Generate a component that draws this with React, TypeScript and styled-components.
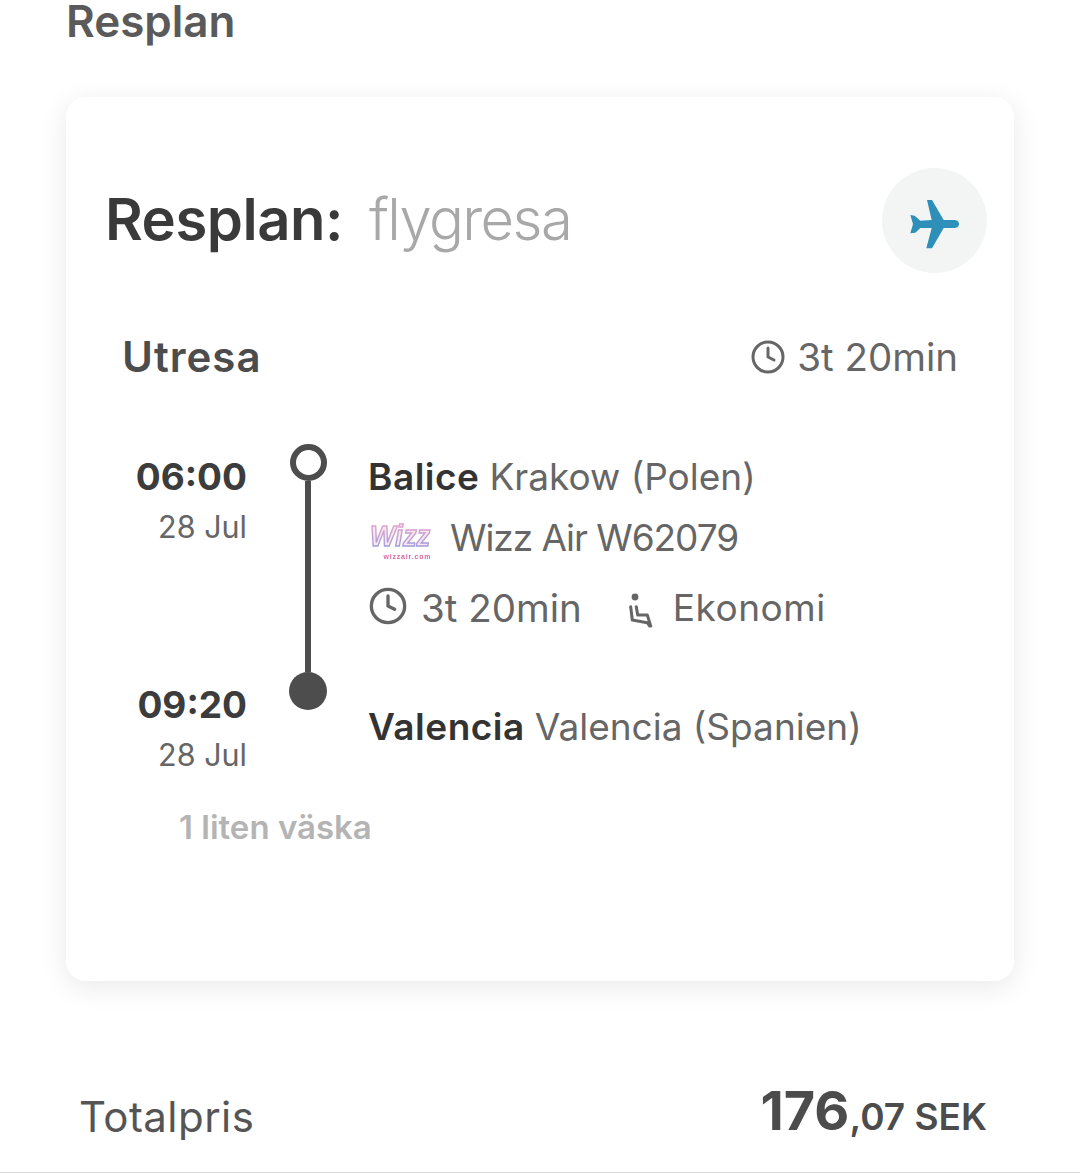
import * as React from 'react';
import styled, { createGlobalStyle } from 'styled-components';
import { Clock } from 'lucide-react';

const GlobalStyle = createGlobalStyle`
  html, body {
    margin: 0;
    padding: 0;
    background: #fff;
  }
  body {
    font-family: Inter, Roboto, sans-serif;
    color: #555;
  }
`;

const Page = styled.div`
  width: 1080px;
  height: 1173px;
  box-sizing: border-box;
  overflow: hidden;
  border-bottom: 1px solid #d8d8d8;
`;

const PageTitle = styled.h2`
  margin: 0;
  padding-left: 66px;
  font-size: 44px;
  line-height: 42px;
  font-weight: 600;
  color: #5a5a5a;
`;

const Card = styled.section`
  width: 948px;
  height: 884px;
  margin: 55px 0 0 66px;
  box-sizing: border-box;
  padding-top: 71px;
  border-radius: 20px;
  background: #fff;
  box-shadow: 0 6px 28px rgba(0, 0, 0, 0.09);
`;

const CardHeader = styled.div`
  display: flex;
  align-items: center;
  height: 105px;
  padding: 0 27px 0 39px;
`;

const CardTitle = styled.h3`
  margin: 0 0 4px;
  font-size: 58px;
  line-height: 66px;
  letter-spacing: -0.5px;
  font-weight: 600;
  color: #3a3a3a;
`;

const CardSubtitle = styled.span`
  margin: 0 0 4px 26px;
  flex: 1;
  font-size: 58px;
  line-height: 66px;
  letter-spacing: -1.6px;
  font-weight: 300;
  color: #a8a8a8;
`;

const IconCircle = styled.div`
  width: 105px;
  height: 105px;
  border-radius: 50%;
  background: #f3f4f4;
  display: flex;
  align-items: center;
  justify-content: center;
`;

const LegHeader = styled.div`
  display: flex;
  justify-content: space-between;
  align-items: center;
  height: 50px;
  margin-top: 59px;
  padding: 0 56px;
`;

const LegTitle = styled.span`
  margin-bottom: 2px;
  font-size: 42px;
  letter-spacing: 1px;
  font-weight: 600;
  color: #4c4c4c;
`;

const Duration = styled.span<{ $gap: number }>`
  display: inline-flex;
  align-items: center;
  gap: ${(p) => p.$gap}px;
  font-size: 38.5px;
  line-height: 40px;
  color: #666;
`;

const RowClock = styled(Clock)`
  margin-bottom: 5px;
`;

const Timeline = styled.div`
  display: flex;
  margin-top: 62px;
  padding-left: 56px;
`;

const TimesColumn = styled.div`
  width: 125px;
  padding-top: 13px;
  text-align: right;
`;

const Time = styled.div<{ $top?: number }>`
  margin-top: ${(p) => p.$top ?? 0}px;
  font-size: 37px;
  line-height: 40px;
  font-weight: 700;
  color: #3c3c3c;
`;

const DateText = styled.div`
  margin-top: 15px;
  font-size: 30.5px;
  line-height: 30px;
  color: #666;
`;

const Marker = styled.div`
  width: 38px;
  height: 266px;
  margin: 0 41px 0 42px;
  display: flex;
  flex-direction: column;
  align-items: center;
`;

const HollowDot = styled.div`
  width: 37px;
  height: 37px;
  box-sizing: border-box;
  flex-shrink: 0;
  border: 6px solid #4d4d4d;
  border-radius: 50%;
`;

const MarkerLine = styled.div`
  width: 6px;
  flex: 1;
  background: #4d4d4d;
`;

const SolidDot = styled.div`
  width: 38px;
  height: 38px;
  flex-shrink: 0;
  border-radius: 50%;
  background: #4d4d4d;
`;

const Details = styled.div`
  padding-top: 13px;
`;

const DetailRow = styled.div<{ $top?: number }>`
  display: flex;
  align-items: center;
  height: 40px;
  margin-top: ${(p) => p.$top ?? 0}px;
  font-size: 37px;
  line-height: 40px;
  color: #666;
  white-space: nowrap;
`;

const Place = styled.strong`
  margin-right: 10px;
  letter-spacing: 0.5px;
  font-weight: 600;
  color: #333;
`;

const FlightName = styled.span`
  margin-left: 18px;
  letter-spacing: -1.05px;
`;

const CabinLabel = styled.span`
  margin-left: 20px;
  letter-spacing: 0.5px;
`;

const SeatIcon = styled.svg`
  margin: 4px 0 0 45px;
`;

const Baggage = styled.div`
  margin: 37px 0 0 113px;
  font-size: 33px;
  line-height: 40px;
  font-weight: 600;
  color: #b4b4b4;
`;

const TotalRow = styled.div`
  display: flex;
  justify-content: space-between;
  align-items: center;
  height: 60px;
  margin-top: 105px;
  padding: 0 93px 0 79px;
`;

const TotalLabel = styled.span`
  font-size: 42px;
  letter-spacing: 0.45px;
  color: #555;
`;

const Price = styled.span`
  margin-bottom: 12px;
  font-size: 37px;
  font-weight: 600;
  color: #4c4c4c;
`;

const PriceWhole = styled.span`
  font-size: 54px;
  font-weight: 700;
`;

const PlaneIcon = () => (
  <svg width="60" height="60" viewBox="134 121 180 180">
    <path
      fill="#2e8fb8"
      d="M200 148 L215 148 L250 208 L283 208 Q296 210 296 220 Q296 230 283 232 L250 232 L215 293 L198 293 L214 232 L180 232 L165 246 L150 248 L158 220 L150 193 L163 195 L180 210 L214 208 Z"
    />
  </svg>
);

const Seat = () => (
  <SeatIcon width="26" height="36" viewBox="0 0 26 36" fill="none">
    <circle cx="8" cy="5" r="3.4" fill="#666" />
    <path
      d="M3.7 14.7 L5.3 28 L20.3 30.7 L22.7 34 M9.3 14.7 L10.7 23 L20.3 23 L23.7 34"
      stroke="#666"
      strokeWidth="3"
      strokeLinecap="round"
      strokeLinejoin="round"
    />
  </SeatIcon>
);

const WizzLogo = () => (
  <svg width="64" height="46" viewBox="0 0 64 46" style={{ filter: 'blur(0.5px)' }}>
    <defs>
      <linearGradient id="wizzStroke" x1="0" y1="0" x2="0" y2="1">
        <stop offset="0" stopColor="#f4a3c8" />
        <stop offset="1" stopColor="#8f9fe0" />
      </linearGradient>
    </defs>
    <text
      x="32"
      y="31"
      textAnchor="middle"
      fontFamily="Liberation Sans, sans-serif"
      fontSize="30"
      fontStyle="italic"
      fontWeight="700"
      textLength="60"
      lengthAdjust="spacingAndGlyphs"
      fill="#fbe6f0"
      stroke="url(#wizzStroke)"
      strokeWidth="1.5"
    >
      Wizz
    </text>
    <text
      x="39"
      y="43.5"
      textAnchor="middle"
      fontFamily="Liberation Sans, sans-serif"
      fontSize="7"
      fontWeight="700"
      textLength="47"
      fill="#d96aa6"
    >
      wizzair.com
    </text>
  </svg>
);

const App = () => (
  <Page>
    <GlobalStyle />
    <PageTitle>Resplan</PageTitle>
    <Card>
      <CardHeader>
        <CardTitle>Resplan:</CardTitle>
        <CardSubtitle>flygresa</CardSubtitle>
        <IconCircle>
          <PlaneIcon />
        </IconCircle>
      </CardHeader>
      <LegHeader>
        <LegTitle>Utresa</LegTitle>
        <Duration $gap={11}>
          <Clock size={36} strokeWidth={2} color="#666" />
          3t 20min
        </Duration>
      </LegHeader>
      <Timeline>
        <TimesColumn>
          <Time>06:00</Time>
          <DateText>28 Jul</DateText>
          <Time $top={143}>09:20</Time>
          <DateText>28 Jul</DateText>
        </TimesColumn>
        <Marker>
          <HollowDot />
          <MarkerLine />
          <SolidDot />
        </Marker>
        <Details>
          <DetailRow>
            <Place>Balice</Place>Krakow (Polen)
          </DetailRow>
          <DetailRow $top={21}>
            <WizzLogo />
            <FlightName>Wizz Air W62079</FlightName>
          </DetailRow>
          <DetailRow $top={30}>
            <Duration $gap={13}>
              <RowClock size={40} strokeWidth={2} color="#666" />
              3t 20min
            </Duration>
            <Seat />
            <CabinLabel>Ekonomi</CabinLabel>
          </DetailRow>
          <DetailRow $top={79}>
            <Place>Valencia</Place>Valencia (Spanien)
          </DetailRow>
        </Details>
      </Timeline>
      <Baggage>1 liten väska</Baggage>
    </Card>
    <TotalRow>
      <TotalLabel>Totalpris</TotalLabel>
      <Price>
        <PriceWhole>176</PriceWhole>,07 SEK
      </Price>
    </TotalRow>
  </Page>
);

export default App;
